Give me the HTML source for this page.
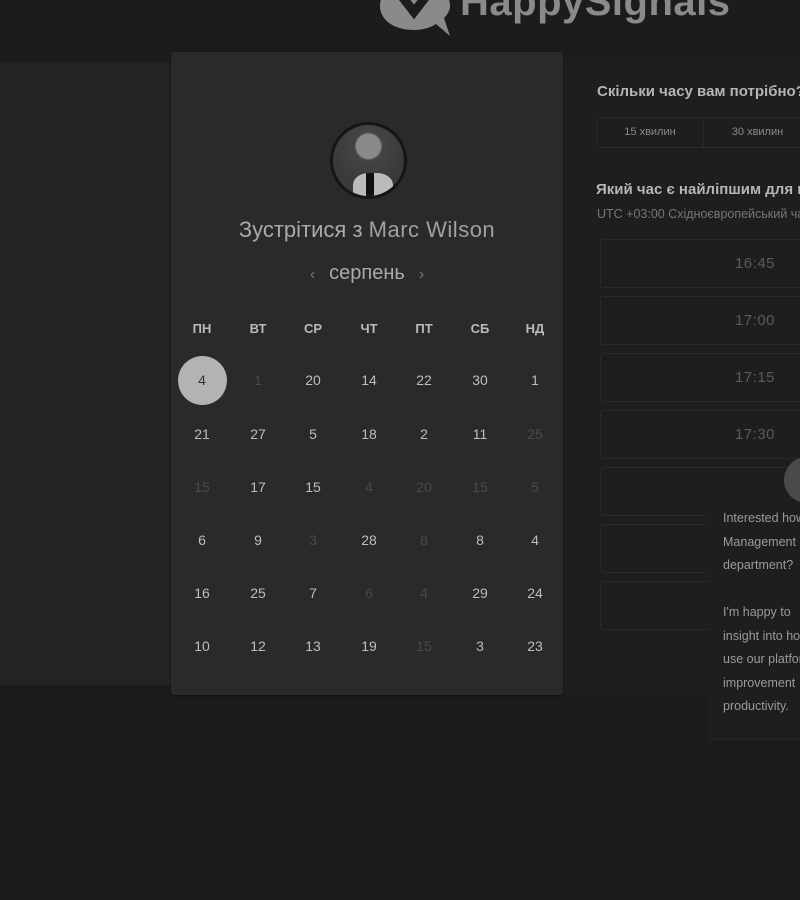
<!DOCTYPE html>
<html><head><meta charset="utf-8"><style>
*{margin:0;padding:0;box-sizing:border-box}
body{width:800px;height:900px;overflow:hidden;background:#1c1c1c;font-family:"Liberation Sans",sans-serif;position:relative}
.abs{position:absolute}
.left{left:0;top:62px;width:171px;height:623px;background:#232323}
.right{left:563px;top:62px;width:237px;height:633px;background:#1e1e1e}
.card{left:171px;top:52px;width:392px;height:643px;background:#2a2a2a;border-radius:3px;box-shadow:0 1px 3px rgba(0,0,0,.4)}
.cell{position:absolute;width:50px;text-align:center;font-size:14px;color:#bdbdbd;transform:translateX(-25px)}
.dim{color:#4a4a4a}
.hd{font-weight:bold;font-size:13px;color:#bbb}
.slot{position:absolute;left:600px;width:310px;height:49px;border:1px solid #2a2a2a;border-radius:3px;color:#5a5a5a;font-size:15px;text-align:center;line-height:47px;letter-spacing:0.5px}
.ptxt{color:#9a9a9a;font-size:12.5px;line-height:23.5px}
</style></head><body>
<div class="abs left"></div>
<div class="abs right"></div>
<svg class="abs" style="left:378px;top:-20px" width="80" height="58" viewBox="0 0 80 58">
<path d="M36 0 C14 0 2 12 2 26 C2 40 16 50 36 50 C44 50 52 48 58 44 L72 56 L66 38 C70 34 72 30 72 26 C72 12 58 0 36 0 Z" fill="#8a8a8a"/>
<path d="M22 14 L36 32 L56 6" stroke="#1c1c1c" stroke-width="9" fill="none"/>
</svg>
<div class="abs" style="left:460px;top:-20px;font-size:40px;font-weight:bold;color:#8a8a8a;letter-spacing:0.5px">HappySignals</div>

<div class="abs card"></div>
<div class="abs" style="left:330px;top:122px;width:77px;height:77px;border-radius:50%;background:#151515;padding:3px">
<div style="width:71px;height:71px;border-radius:50%;background:radial-gradient(circle at 50% 30%,#8a8a8a 0,#8a8a8a 12px,#444 14px,#3a3a3a 60%);position:relative;overflow:hidden">
<div style="position:absolute;left:20px;top:48px;width:40px;height:30px;background:#bbb;border-radius:40% 40% 0 0"></div>
<div style="position:absolute;left:33px;top:48px;width:8px;height:26px;background:#111"></div>
</div></div>
<div class="abs" style="left:171px;top:217px;width:392px;text-align:center;font-size:22px;color:#aaa">Зустрітися з <span style="color:#a0a0a0;letter-spacing:0.5px">Marc Wilson</span></div>
<div class="abs" style="left:171px;top:262px;width:392px;text-align:center;font-size:20px;color:#aaa"><span style="color:#777;font-size:16px;margin-right:14px">‹</span>серпень<span style="color:#777;font-size:16px;margin-left:14px">›</span></div>
<div id="cal"></div>

<div class="abs" style="left:597px;top:83px;font-size:15px;font-weight:bold;color:#b5b5b5;white-space:nowrap">Скільки часу вам потрібно?</div>
<div class="abs" style="left:596px;top:117px;width:220px;height:31px;border:1px solid #2a2a2a;border-radius:3px;font-size:11px;color:#8a8a8a">
<div class="abs" style="left:0;top:0;width:107px;height:29px;line-height:29px;text-align:center;border-right:1px solid #2a2a2a">15 хвилин</div>
<div class="abs" style="left:107px;top:0;width:107px;height:29px;line-height:29px;text-align:center">30 хвилин</div></div>
<div class="abs" style="left:596px;top:181px;font-size:15px;font-weight:bold;color:#b5b5b5;white-space:nowrap">Який час є найліпшим для вас?</div>
<div class="abs" style="left:597px;top:207px;font-size:12.5px;color:#777;white-space:nowrap">UTC +03:00 Східноєвропейський час</div>
<div class="slot" style="top:239px">16:45</div>
<div class="slot" style="top:296px">17:00</div>
<div class="slot" style="top:353px">17:15</div>
<div class="slot" style="top:410px">17:30</div>
<div class="slot" style="top:467px"></div>
<div class="slot" style="top:524px"></div>
<div class="slot" style="top:581px"></div>

<div class="abs" style="left:708px;top:500px;width:100px;height:240px;background:#1e1e1e;border-bottom:1px solid #262626"></div>
<div class="abs" style="left:784px;top:457px;width:46px;height:46px;border-radius:50%;background:#4a4a4a"></div>
<div class="abs ptxt" style="left:723px;top:507px;width:200px;white-space:nowrap">Interested how<br>Management<br>department?<br><br>I'm happy to<br>insight into how<br>use our platform<br>improvement<br>productivity.</div>
<script>
var hd=["ПН","ВТ","СР","ЧТ","ПТ","СБ","НД"];
var xs=[202,258,313,369,424,480,535];
var rows=[["4","1d","20","14","22","30","1"],["21","27","5","18","2","11","25d"],["15d","17","15","4d","20d","15d","5d"],["6","9","3d","28","8d","8","4"],["16","25","7","6d","4d","29","24"],["10","12","13","19","15d","3","23"]];
var ys=[380,434,487,540,593,646];
var h="";
hd.forEach(function(t,i){h+='<div class="cell hd" style="left:'+xs[i]+'px;top:321px">'+t+'</div>'});
h+='<div class="abs" style="left:178px;top:356px;width:49px;height:49px;border-radius:50%;background:#b3b3b3"></div>';
rows.forEach(function(r,j){r.forEach(function(v,i){var d=v.indexOf("d")>0;var s=(j==0&&i==0)?';color:#333':'';h+='<div class="cell'+(d?' dim':'')+'" style="left:'+xs[i]+'px;top:'+(ys[j]-8)+'px'+s+'">'+v.replace("d","")+'</div>'})});
document.getElementById("cal").innerHTML=h;
</script>
</body></html>
